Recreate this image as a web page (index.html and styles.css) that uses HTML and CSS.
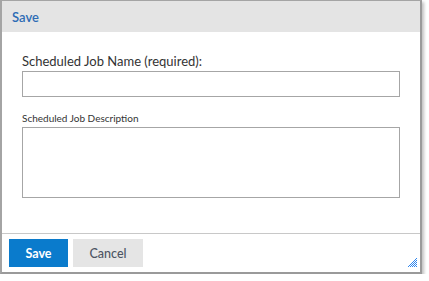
FILE: index.html
```html
<!DOCTYPE html>
<html>
<head>
<meta charset="utf-8">
<link rel="stylesheet" href="styles.css">
</head>
<body>
<div class="dialog">
  <div class="header"><span class="title">Save</span></div>
  <div class="content">
    <label class="label-main">Scheduled Job Name (required):</label>
    <input class="field" type="text">
    <label class="label-small">Scheduled Job Description</label>
    <textarea class="area"></textarea>
  </div>
  <div class="footer">
    <button class="btn btn-primary">Save</button>
    <button class="btn btn-secondary">Cancel</button>
  </div>
  <svg class="grip" width="9" height="9" viewBox="0 0 9 9">
    <g fill="#2f86ee">
      <rect x="8" y="0" width="1" height="1"/>
      <rect x="7" y="1" width="1" height="1"/>
      <rect x="6" y="2" width="1" height="1"/><rect x="8" y="2" width="1" height="1"/>
      <rect x="5" y="3" width="1" height="1"/><rect x="7" y="3" width="1" height="1"/>
      <rect x="4" y="4" width="1" height="1"/><rect x="6" y="4" width="1" height="1"/><rect x="8" y="4" width="1" height="1"/>
      <rect x="3" y="5" width="1" height="1"/><rect x="5" y="5" width="1" height="1"/><rect x="7" y="5" width="1" height="1"/>
      <rect x="2" y="6" width="1" height="1"/><rect x="4" y="6" width="1" height="1"/><rect x="6" y="6" width="1" height="1"/><rect x="8" y="6" width="1" height="1"/>
      <rect x="1" y="7" width="1" height="1"/><rect x="3" y="7" width="1" height="1"/><rect x="5" y="7" width="1" height="1"/><rect x="7" y="7" width="1" height="1"/>
      <rect x="0" y="8" width="1" height="1"/><rect x="2" y="8" width="1" height="1"/><rect x="4" y="8" width="1" height="1"/><rect x="6" y="8" width="1" height="1"/><rect x="8" y="8" width="1" height="1"/>
    </g>
  </svg>
</div>
</body>
</html>
```
FILE: styles.css
```css
html, body {
  margin: 0;
  padding: 0;
  background: #ffffff;
}
body {
  font-family: Lato, "Noto Sans", sans-serif;
}
.dialog {
  position: relative;
  box-sizing: border-box;
  width: 422px;
  height: 274px;
  border-top: 1px solid #a4a4a4;
  border-left: 2px solid #a4a4a4;
  border-right: 2px solid #9a9a9a;
  border-bottom: 2px solid #9a9a9a;
  box-shadow: 2px 2px 3px rgba(0,0,0,0.25);
  background: #fff;
  display: flex;
  flex-direction: column;
}
.header {
  height: 31px;
  background: #e4e4e4;
  display: flex;
  align-items: center;
  padding-left: 10px;
}
.title {
  color: #2e6cb5;
  font-size: 13px;
  font-weight: 600;
}
.content {
  height: 202px;
  box-sizing: border-box;
  padding: 21px 20px 0 20px;
  display: flex;
  flex-direction: column;
  border-bottom: 1px solid #c8c8c8;
}
.label-main {
  font-size: 13px;
  color: #333;
  line-height: 16px;
  margin-bottom: 2px;
}
.field {
  box-sizing: border-box;
  width: 378px;
  height: 26px;
  margin: 0;
  border: 1px solid #a6a6a6;
  padding: 0 4px;
}
.label-small {
  font-size: 10px;
  color: #333;
  line-height: 12px;
  margin-top: 15px;
  margin-bottom: 3px;
}
.area {
  box-sizing: border-box;
  width: 378px;
  height: 71px;
  margin: 0;
  border: 1px solid #a6a6a6;
  resize: none;
  padding: 4px;
}
.footer {
  display: flex;
  gap: 5px;
  padding: 5px 7px;
}
.btn {
  height: 28px;
  border: none;
  margin: 0;
  font-family: Lato, "Noto Sans", sans-serif;
  font-size: 12.5px;
  padding: 0;
}
.btn-primary {
  width: 59px;
  background: #0a7bcc;
  color: #fff;
  font-weight: 700;
}
.btn-secondary {
  width: 70px;
  background: #e5e5e5;
  color: #4d5563;
  font-weight: 500;
}
.grip {
  position: absolute;
  right: 3px;
  bottom: 5px;
}
```
